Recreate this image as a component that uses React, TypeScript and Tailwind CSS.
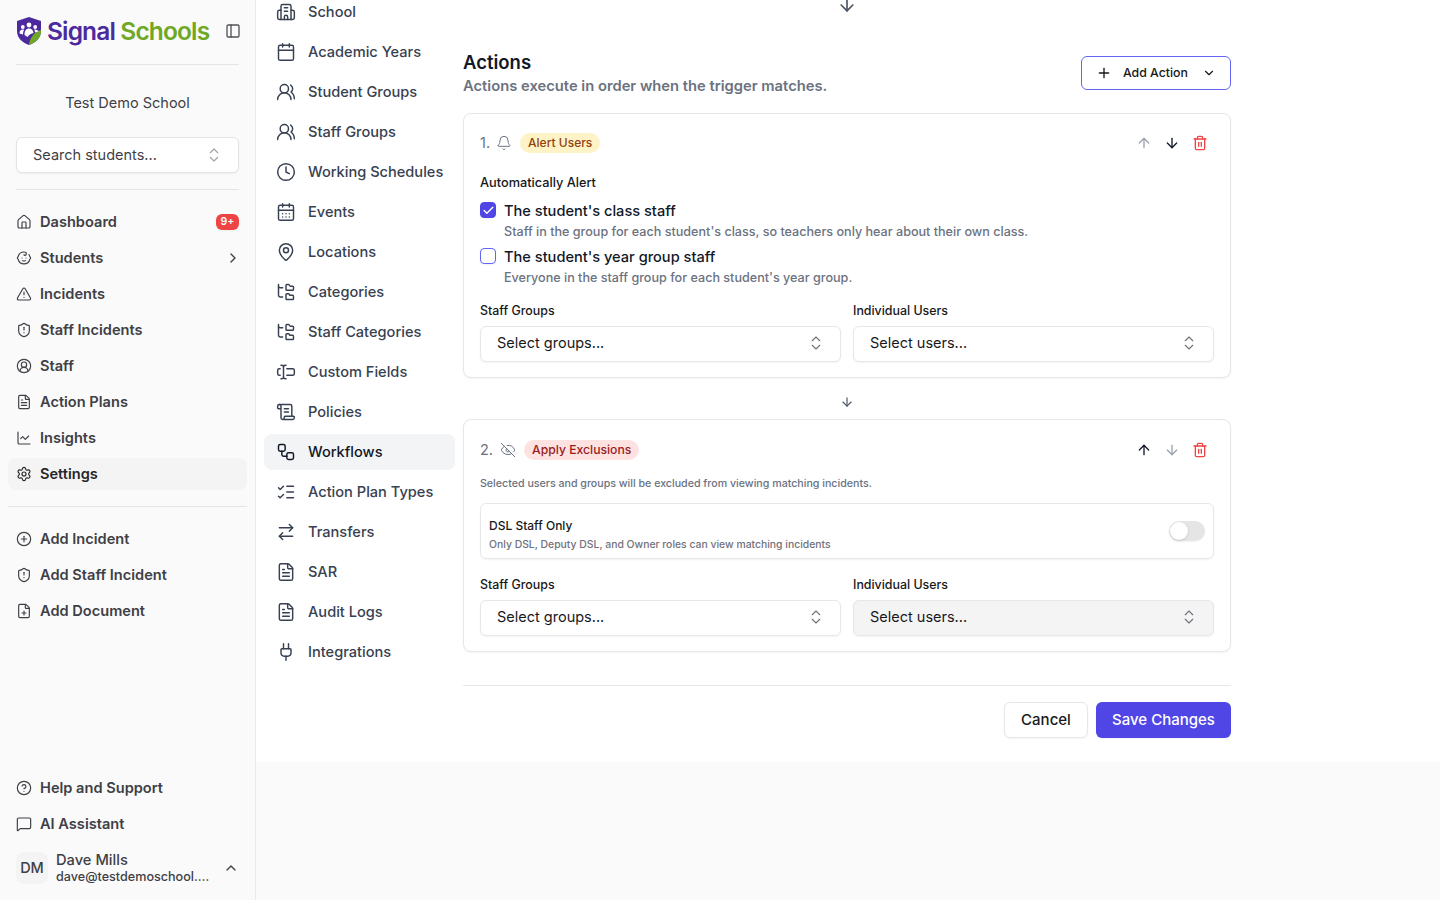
import React from 'react';
import {
  ArrowDown, ArrowRightLeft, ArrowUp, Baby, Bell, Calendar, CalendarDays, ChartLine, Check, ChevronDown,
  ChevronRight, ChevronUp, ChevronsUpDown, CircleHelp, CirclePlus, CircleUserRound, Clock, EyeOff, FilePlus,
  FileText, FolderTree, House, ListChecks, MapPin, MessageSquare, PanelLeft, Plug, Plus, ScrollText,
  Settings, ShieldAlert, TextCursorInput, Trash2, TriangleAlert, UsersRound, Workflow,
} from 'lucide-react';

const SchoolIcon = ({ size = 20, strokeWidth = 1.75, className = '' }: { size?: number; strokeWidth?: number; className?: string }) => (
  <svg width={size} height={size} viewBox="0 0 24 24" fill="none" stroke="currentColor" strokeWidth={strokeWidth} strokeLinecap="round" strokeLinejoin="round" className={className}>
    <path d="M6 21V5a2 2 0 0 1 2-2h8a2 2 0 0 1 2 2v16" />
    <path d="M6 10H4a2 2 0 0 0-2 2v7a2 2 0 0 0 2 2h16a2 2 0 0 0 2-2v-7a2 2 0 0 0-2-2h-2" />
    <path d="M10 21v-3a2 2 0 0 1 4 0v3" />
    <path d="M10 7h4" />
    <path d="M10 11h4" />
  </svg>
);

const mainNav = [
  { label: 'Dashboard', icon: House, badge: '9+' },
  { label: 'Students', icon: Baby, chevron: true },
  { label: 'Incidents', icon: TriangleAlert },
  { label: 'Staff Incidents', icon: ShieldAlert },
  { label: 'Staff', icon: CircleUserRound },
  { label: 'Action Plans', icon: FileText },
  { label: 'Insights', icon: ChartLine },
  { label: 'Settings', icon: Settings, active: true },
];

const quickNav = [
  { label: 'Add Incident', icon: CirclePlus },
  { label: 'Add Staff Incident', icon: ShieldAlert },
  { label: 'Add Document', icon: FilePlus },
];

const settingsNav = [
  { label: 'School', icon: SchoolIcon },
  { label: 'Academic Years', icon: Calendar },
  { label: 'Student Groups', icon: UsersRound },
  { label: 'Staff Groups', icon: UsersRound },
  { label: 'Working Schedules', icon: Clock },
  { label: 'Events', icon: CalendarDays },
  { label: 'Locations', icon: MapPin },
  { label: 'Categories', icon: FolderTree },
  { label: 'Staff Categories', icon: FolderTree },
  { label: 'Custom Fields', icon: TextCursorInput },
  { label: 'Policies', icon: ScrollText },
  { label: 'Workflows', icon: Workflow, active: true },
  { label: 'Action Plan Types', icon: ListChecks },
  { label: 'Transfers', icon: ArrowRightLeft },
  { label: 'SAR', icon: FileText },
  { label: 'Audit Logs', icon: FileText },
  { label: 'Integrations', icon: Plug },
];

const Logo = () => (
  <svg width="26" height="30" viewBox="0 0 26 30" className="shrink-0">
    <path d="M13 1 L25 5 V15 C25 22 20 26.5 13 29 C6 26.5 1 22 1 15 V5 Z" fill="#4c2a9e" />
    <path d="M25 14 V15 C25 22 20 26.5 13 29 C13.5 22 18 16 25 14 Z" fill="#6fa824" />
    <g fill="#fff">
      <circle cx="13" cy="9" r="2.4" />
      <circle cx="6.8" cy="11" r="1.9" />
      <circle cx="19.2" cy="11" r="1.9" />
      <path d="M8.5 19 C8.5 14.5 10.5 12.5 13 12.5 C15.5 12.5 17.5 14.5 17.5 17 C15.5 17.5 13 18.5 11.5 21 Z" />
      <path d="M3.5 17.5 C3.5 14.5 5 13.5 6.8 13.5 C7.3 13.5 7.8 13.6 8.2 13.8 C7.4 15 7 16.5 7 18.5 Z" />
      <path d="M22.5 15.5 C22.5 14.5 20.8 13.5 19.2 13.5 C18.8 13.5 18.5 13.6 18.2 13.7 C18.8 14.5 19 15.5 19 16.5 Z" />
    </g>
  </svg>
);

const Sidebar = () => (
  <aside className="w-[256px] h-[900px] shrink-0 flex flex-col bg-[#fafafa] border-r border-[#e9e9ec]">
    <div className="mx-4 h-[65px] pb-[2px] flex items-center border-b border-[#e4e4e7]">
      <Logo />
      <span className="ml-[5px] text-[24.5px] leading-none font-semibold tracking-[-0.035em] whitespace-nowrap">
        <span className="text-[#4c2a9e]">Signal</span> <span className="text-[#6fa824]">Schools</span>
      </span>
      <PanelLeft size={16} className="ml-auto -mr-[2px] text-[#52525b]" />
    </div>
    <div className="h-[72px] pt-1 flex items-center justify-center text-[14.5px] text-[#3f3f46]">Test Demo School</div>
    <div className="mx-4 h-9 flex items-center justify-between pl-4 pr-[15px] bg-white border border-[#e4e4e7] rounded-md shadow-xs text-[14.5px] text-[#3f3f46]">
      Search students...
      <ChevronsUpDown size={18} strokeWidth={1.5} className="text-[#a1a1aa]" />
    </div>
    <div className="mx-4 mt-4 border-t border-[#e4e4e7]" />
    <nav className="mt-4 px-2 flex flex-col gap-1">
      {mainNav.map((item) => (
        <div key={item.label} className={`h-8 px-2 flex items-center gap-2 rounded-lg text-[14.6px] leading-6 font-semibold ${item.active ? 'bg-[#f4f4f5] text-[#27272a]' : 'text-[#3f3f46]'}`}>
          <item.icon size={16} strokeWidth={1.75} />
          <span>{item.label}</span>
          {item.badge && <span className="ml-auto w-[23px] h-4 flex items-center justify-center rounded-md bg-[#ef4444] text-white text-[10.5px] font-semibold shadow-xs">{item.badge}</span>}
          {item.chevron && <ChevronRight size={16} className="ml-auto -mr-[2px]" />}
        </div>
      ))}
    </nav>
    <div className="mx-2 mt-4 border-t border-[#e4e4e7]" />
    <nav className="mt-4 px-2 flex flex-col gap-1">
      {quickNav.map((item) => (
        <div key={item.label} className="h-8 px-2 flex items-center gap-2 text-[14.6px] leading-6 font-semibold text-[#3f3f46]">
          <item.icon size={16} strokeWidth={1.75} />
          <span>{item.label}</span>
        </div>
      ))}
    </nav>
    <nav className="mt-auto px-2 flex flex-col gap-1">
      {[{ label: 'Help and Support', icon: CircleHelp }, { label: 'AI Assistant', icon: MessageSquare }].map((item) => (
        <div key={item.label} className="h-8 px-2 flex items-center gap-2 text-[14.6px] leading-6 font-semibold text-[#3f3f46]">
          <item.icon size={16} strokeWidth={1.75} />
          <span>{item.label}</span>
        </div>
      ))}
    </nav>
    <div className="mt-3 mb-4 mx-4 h-8 flex items-center gap-2 text-[#3f3f46]">
      <div className="w-8 h-8 shrink-0 rounded-lg bg-[#f4f4f5] flex items-center justify-center text-[14.5px] font-medium">DM</div>
      <div className="min-w-0 w-[155px]">
        <div className="text-[14.7px] font-medium leading-4">Dave Mills</div>
        <div className="mt-[1px] text-[12.6px] font-medium leading-4 truncate">dave@testdemoschool.com</div>
      </div>
      <ChevronUp size={16} className="ml-auto" />
    </div>
  </aside>
);

const SelectBox = ({ text, muted }: { text: string; muted?: boolean }) => (
  <div className={`h-9 pl-4 pr-[15px] pb-[2px] flex items-center justify-between rounded-md border border-[#e5e7eb] shadow-xs text-[14.5px] text-[#18181b] ${muted ? 'bg-[#f4f4f5]' : 'bg-white'}`}>
    {text}
    <ChevronsUpDown size={18} strokeWidth={1.5} className="text-[#71717a]" />
  </div>
);

const SelectRow = ({ mutedUsers }: { mutedUsers?: boolean }) => (
  <div className="grid grid-cols-2 gap-3">
    <div>
      <div className="mb-[7px] text-[12.4px] leading-4 font-medium text-[#18181b]">Staff Groups</div>
      <SelectBox text="Select groups..." />
    </div>
    <div>
      <div className="mb-[7px] text-[12.4px] leading-4 font-medium text-[#18181b]">Individual Users</div>
      <SelectBox text="Select users..." muted={mutedUsers} />
    </div>
  </div>
);

const CardControls = ({ upActive }: { upActive: boolean }) => (
  <div className="ml-auto flex items-center gap-3 pr-[6px]">
    <ArrowUp size={16} className={upActive ? 'text-[#111827]' : 'text-[#9ca3af]'} />
    <ArrowDown size={16} className={upActive ? 'text-[#9ca3af]' : 'text-[#111827]'} />
    <Trash2 size={16} className="text-[#ef4444]" />
  </div>
);

const CheckRow = ({ checked, title, desc }: { checked?: boolean; title: string; desc: string }) => (
  <div className="flex gap-2">
    <div className={`mt-[1px] w-4 h-4 rounded-[4px] flex items-center justify-center shadow-xs border-[1.5px] ${checked ? 'bg-[#4f46e5] border-[#4f46e5]' : 'bg-white border-[#6366f1]'}`}>
      {checked && <Check size={13} strokeWidth={2.5} className="shrink-0 text-white" />}
    </div>
    <div>
      <div className="text-[14.6px] leading-5 font-medium text-[#111827]">{title}</div>
      <div className="mt-[3px] text-[12.6px] leading-4 font-medium text-[#6b7280]">{desc}</div>
    </div>
  </div>
);

const Actions = () => (
  <div className="w-[768px]">
    <div className="h-[12px] -mt-[5px] flex justify-center">
      <ArrowDown size={20} className="shrink-0 text-[#4b5563]" />
    </div>
    <div className="mt-[43px] flex items-center justify-between">
      <div>
        <h2 className="text-[18.5px] leading-6 font-semibold text-[#111827]">Actions</h2>
        <p className="mt-[2px] text-[14.75px] leading-5 font-semibold text-[#6b7280]">Actions execute in order when the trigger matches.</p>
      </div>
      <div className="w-[150px] h-[34px] pl-[14px] pr-[14px] flex items-center bg-white border-[1.5px] border-[#6366f1] rounded-md text-[12.3px] font-medium text-[#18181b]">
        <Plus size={16} />
        <span className="ml-[11px]">Add Action</span>
        <ChevronDown size={14} className="ml-auto" />
      </div>
    </div>

    <section className="mt-[17px] h-[265px] p-4 bg-white border border-[#e5e7eb] rounded-lg shadow-xs">
      <div className="h-7 -mt-[1px] flex items-center">
        <span className="text-[14.5px] text-[#6b7280]">1.</span>
        <Bell size={16} strokeWidth={1.5} className="ml-[6px] text-[#6b7280]" />
        <span className="ml-2 h-5 px-2 flex items-center rounded-full bg-[#fef3c7] text-[12px] font-medium text-[#92400e]">Alert Users</span>
        <CardControls upActive={false} />
      </div>
      <div className="mt-[18px] text-[12.75px] leading-4 font-medium text-[#18181b]">Automatically Alert</div>
      <div className="mt-[10px] flex flex-col gap-[7px]">
        <CheckRow checked title="The student's class staff" desc="Staff in the group for each student's class, so teachers only hear about their own class." />
        <CheckRow title="The student's year group staff" desc="Everyone in the staff group for each student's year group." />
      </div>
      <div className="mt-[17px]"><SelectRow /></div>
    </section>

    <div className="h-[41px] pt-[7px] flex items-center justify-center">
      <ArrowDown size={14} className="text-[#4b5563]" />
    </div>

    <section className="h-[233px] p-4 bg-white border border-[#e5e7eb] rounded-lg shadow-xs">
      <div className="h-7 flex items-center">
        <span className="text-[14.5px] text-[#6b7280]">2.</span>
        <EyeOff size={16} strokeWidth={1.5} className="ml-[7px] text-[#6b7280]" />
        <span className="ml-2 h-5 px-2 flex items-center rounded-full bg-[#fee2e2] text-[12.2px] font-medium text-[#991b1b]">Apply Exclusions</span>
        <CardControls upActive />
      </div>
      <p className="mt-[12px] text-[10.65px] leading-4 font-medium text-[#6b7280]">Selected users and groups will be excluded from viewing matching incidents.</p>
      <div className="mt-[11px] h-[56px] pl-2 pr-2 flex items-center justify-between rounded-md border border-[#e5e7eb] shadow-xs">
        <div className="pt-2">
          <div className="text-[12px] leading-4 font-medium text-[#18181b]">DSL Staff Only</div>
          <div className="mt-[3px] text-[10.4px] leading-4 font-medium text-[#71717a]">Only DSL, Deputy DSL, and Owner roles can view matching incidents</div>
        </div>
        <div className="w-9 h-5 p-[1px] rounded-full bg-[#e5e5e5] shadow-xs">
          <div className="w-[18px] h-[18px] rounded-full bg-white shadow-sm" />
        </div>
      </div>
      <div className="mt-[18px]"><SelectRow mutedUsers /></div>
    </section>

    <div className="mt-[33px] pt-4 border-t border-[#e5e7eb] flex justify-end gap-2">
      <div className="w-[84px] h-9 flex items-center justify-center bg-white border border-[#e5e7eb] rounded-md shadow-xs text-[15px] font-medium text-[#18181b]">Cancel</div>
      <div className="w-[135px] h-9 flex items-center justify-center bg-[#4f46e5] rounded-md shadow-xs text-[15px] font-medium text-white">Save Changes</div>
    </div>
  </div>
);

export default function App() {
  return (
    <div className="h-[900px] w-[1440px] overflow-hidden flex bg-[#fafafa] font-[Inter,sans-serif]">
      <Sidebar />
      <div className="flex-1 flex flex-col">
        <div className="bg-white flex items-start pb-6">
          <nav className="w-[207px] shrink-0 -mt-[6px] pl-2 pr-2 flex flex-col gap-1">
            {settingsNav.map((item) => (
              <div key={item.label} className={`h-9 px-3 flex items-center gap-3 rounded-lg text-[14.6px] leading-6 font-medium whitespace-nowrap ${item.active ? 'bg-[#f3f4f6] text-[#111827]' : 'text-[#374151]'}`}>
                <item.icon size={20} strokeWidth={1.75} className="shrink-0" />
                <span>{item.label}</span>
              </div>
            ))}
          </nav>
          <Actions />
        </div>
      </div>
    </div>
  );
}
